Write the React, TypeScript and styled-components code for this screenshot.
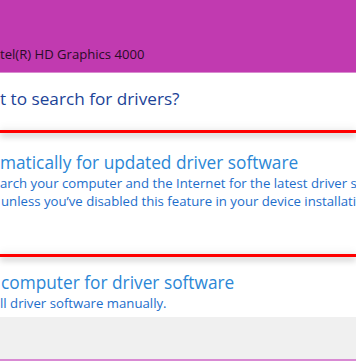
import React from 'react';
import styled, { createGlobalStyle } from 'styled-components';

const GlobalStyle = createGlobalStyle`
    html, body {
        margin: 0;
        padding: 0;
        background: #ffffff;
    }
    body {
        font-family: "Open Sans", "Noto Sans", "Liberation Sans", sans-serif;
    }
`;

const Window = styled.div`
    width: 356px;
    height: 364px;
    overflow: hidden;
    display: flex;
    flex-direction: column;
    background: #ffffff;
`;

const TitleBar = styled.div`
    height: 72px;
    flex: none;
    background: #c13ab0;
    border-bottom: 1px solid #d98bd0;
    display: flex;
    align-items: flex-end;
    box-sizing: content-box;
`;

const TitleText = styled.div`
    font-size: 13.1px;
    color: #2a0b27;
    line-height: 16px;
    padding: 0 0 10px 0;
    white-space: nowrap;
`;

const Content = styled.div`
    flex: 1;
    display: flex;
    flex-direction: column;
    overflow: hidden;
`;

const Question = styled.div`
    font-size: 17.2px;
    line-height: 22px;
    color: #1c4397;
    padding: 15px 0 0 0;
    height: 34px;
    white-space: nowrap;
`;

const Highlight = styled.div`
    height: 3px;
    background: #ff0000;
    margin-top: 8px;
    box-shadow: 0 -4px 6px rgba(0, 0, 0, 0.05), 0 3px 6px rgba(0, 0, 0, 0.3);
`;

const Option = styled.div<{ $height: number; $top: number }>`
    height: ${(p) => p.$height}px;
    padding-top: ${(p) => p.$top}px;
    box-sizing: border-box;
    white-space: nowrap;
`;

const OptionTitle = styled.div<{ $indent?: number }>`
    font-size: 17.3px;
    line-height: 22px;
    color: #2b87d6;
    margin-left: ${(p) => p.$indent ?? 0}px;
    margin-bottom: 1px;
`;

const OptionDesc = styled.div<{ $indent?: number }>`
    font-size: 13.2px;
    line-height: 17.5px;
    color: #1d6ecb;
    margin-left: ${(p) => p.$indent ?? 0}px;
`;

const Footer = styled.div`
    height: 42px;
    flex: none;
    background: #f0f0f0;
    border-bottom: 2px solid #d98ad3;
    margin-bottom: 3px;
    margin-top: auto;
`;

export default function App() {
    return (
        <Window>
            <GlobalStyle />
            <TitleBar>
                <TitleText>tel(R) HD Graphics 4000</TitleText>
            </TitleBar>
            <Content>
                <Question>t to search for drivers?</Question>
                <Highlight />
                <Option $height={113} $top={19}>
                    <OptionTitle>matically for updated driver software</OptionTitle>
                    <OptionDesc>arch your computer and the Internet for the latest driver software</OptionDesc>
                    <OptionDesc $indent={1}>unless you’ve disabled this feature in your device installation settings.</OptionDesc>
                </Option>
                <Highlight />
                <Option $height={60} $top={15}>
                    <OptionTitle $indent={1}>computer for driver software</OptionTitle>
                    <OptionDesc>ll driver software manually.</OptionDesc>
                </Option>
                <Footer />
            </Content>
        </Window>
    );
}
